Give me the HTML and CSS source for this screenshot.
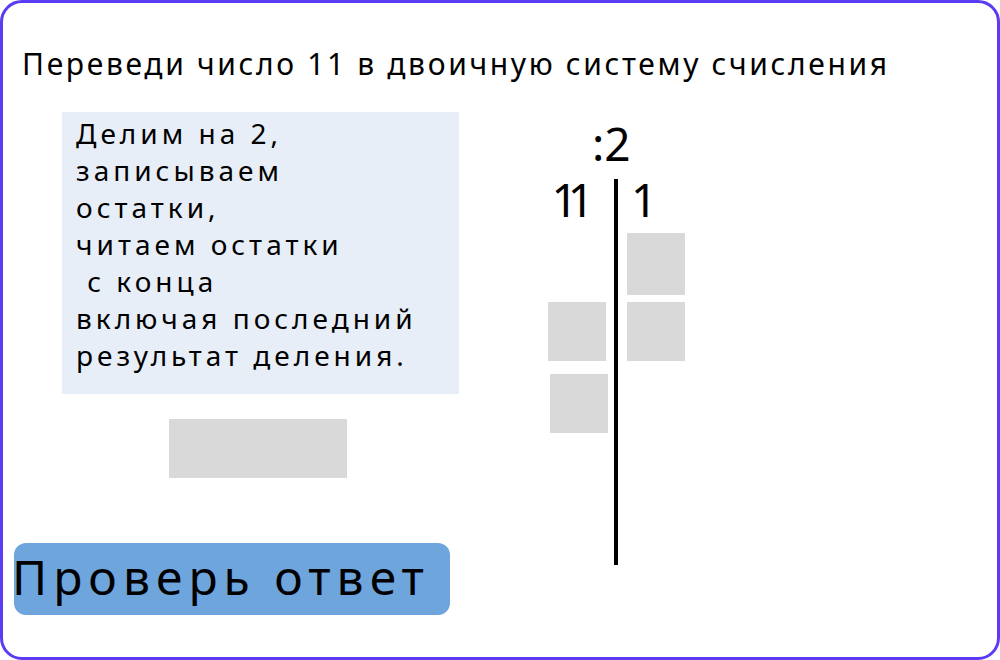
FILE: index.html
```html
<!DOCTYPE html>
<html lang="ru">
<head>
    <meta charset="UTF-8">
    <meta name="viewport" content="width=device-width, initial-scale=1.0">
    <title>Двоичная система</title>
    <link rel="stylesheet" href="styles.css">
</head>
<body>

<div class="card">
    <div class="title">Переведи число 11 в двоичную систему счисления</div>

    <div class="workspace">
        <div class="left-side">
            <div class="hint">
                Делим на 2,<br>
                записываем<br>
                остатки,<br>
                читаем остатки<br>
                &nbsp;с конца<br>
                включая последний<br>
                результат деления.
            </div>
            <div class="answer-slot"></div>
        </div>

        <div class="division">
            <div class="divisor">:2</div>
            <div class="table">
                <div class="col-left">
                    <div class="num num-left">11</div>
                    <div class="slot slot-l1"></div>
                    <div class="slot slot-l2"></div>
                </div>
                <div class="rule"></div>
                <div class="col-right">
                    <div class="num num-right">1</div>
                    <div class="slot slot-r1"></div>
                    <div class="slot slot-r2"></div>
                </div>
            </div>
        </div>

        <button class="check-btn">Проверь ответ</button>
    </div>
</div>

</body>
</html>
```

FILE: styles.css
```css
body {
    margin: 0;
    padding: 0;
    background-color: white;
    font-family: "Noto Sans", "DejaVu Sans", sans-serif;
    color: #000;
}

.card {
    width: 1000px;
    height: 660px;
    box-sizing: border-box;
    border: 3px solid #5b3bf4;
    border-radius: 22px;
    padding: 0 0 0 11px;
}

.title {
    margin: 41px 0 0 8px;
    font-size: 30px;
    line-height: 40px;
    letter-spacing: 2.65px;
    white-space: nowrap;
}

.workspace {
    display: grid;
    grid-template-columns: 445px auto;
    grid-template-rows: auto auto;
    align-items: start;
    margin-top: 28px;
}

.left-side {
    grid-column: 1;
    grid-row: 1;
    margin-left: 48px;
    display: flex;
    flex-direction: column;
    align-items: center;
}

.hint {
    width: 397px;
    height: 282px;
    box-sizing: border-box;
    background-color: #e8eef7;
    padding: 3px 0 0 14px;
    font-size: 28px;
    line-height: 37px;
    letter-spacing: 4px;
    white-space: nowrap;
}

.answer-slot {
    width: 178px;
    height: 59px;
    margin: 25px 6px 0 0;
    background-color: #d9d9d9;
}

.division {
    grid-column: 2;
    grid-row: 1 / 3;
    margin-left: 79px;
    display: flex;
    flex-direction: column;
}

.divisor {
    font-size: 46px;
    line-height: 50px;
    margin-top: 6px;
    padding-left: 54px;
}

.table {
    display: flex;
    margin-top: 11px;
}

.col-left {
    width: 70px;
    display: flex;
    flex-direction: column;
    align-items: flex-end;
}

.col-right {
    display: flex;
    flex-direction: column;
    margin-left: 9px;
}

.rule {
    width: 4px;
    height: 386px;
    margin-left: 6px;
    background-color: #000;
}

.num {
    font-size: 46px;
    line-height: 40px;
    height: 50px;
}

.num-left {
    margin-right: 14px;
    letter-spacing: -10px;
    padding-right: 10px;
}

.num-right {
    padding-left: 4px;
}

.slot {
    width: 58px;
    background-color: #d9d9d9;
}

.slot-l1 {
    height: 59px;
    margin: 73px 2px 0 0;
}

.slot-l2 {
    height: 59px;
    margin-top: 13px;
}

.slot-r1 {
    height: 62px;
    margin-top: 4px;
}

.slot-r2 {
    height: 59px;
    margin-top: 7px;
}

.check-btn {
    grid-column: 1;
    grid-row: 2;
    width: 436px;
    height: 72px;
    margin-top: 65px;
    background-color: #6fa5dd;
    border: none;
    border-radius: 12px;
    padding: 0 0 6px 0;
    text-align: left;
    text-indent: -2px;
    font-family: "Noto Sans", "DejaVu Sans", sans-serif;
    font-size: 48px;
    letter-spacing: 6px;
    white-space: nowrap;
    color: #000;
    cursor: pointer;
}
```
